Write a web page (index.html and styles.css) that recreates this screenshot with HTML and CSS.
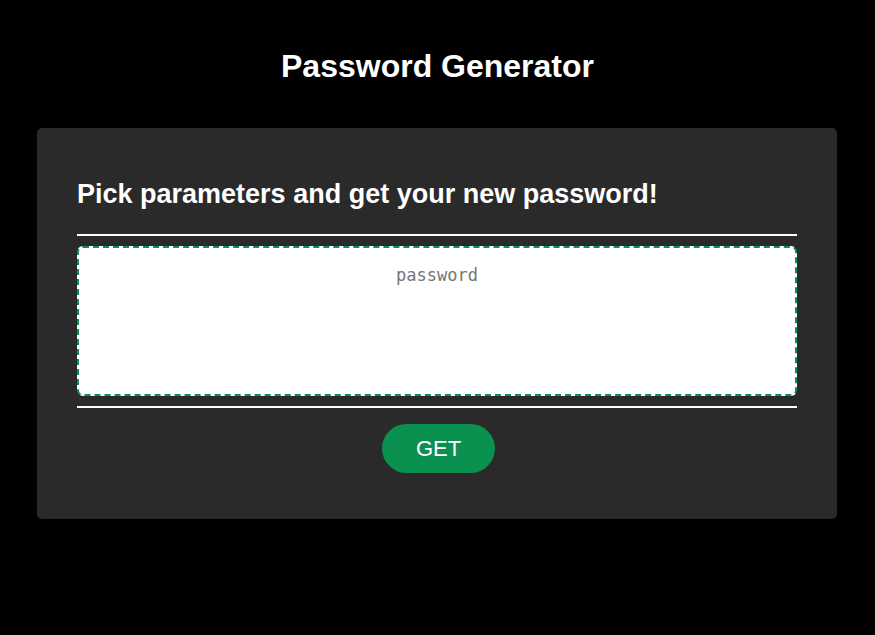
FILE: index.html
```html
<!DOCTYPE html>
<html lang="en">
<head>
<meta charset="UTF-8">
<title>Password Generator</title>
<link rel="stylesheet" href="styles.css">
</head>
<body>
<div class="wrapper">
  <header class="page-header">
    <h1>Password Generator</h1>
  </header>
  <div class="card">
    <div class="card-header">
      <h2>Pick parameters and get your new password!</h2>
    </div>
    <div class="card-body">
      <textarea readonly class="password" placeholder="password" aria-label="Generated Password"></textarea>
    </div>
    <div class="card-footer">
      <button class="btn">GET</button>
    </div>
  </div>
</div>
</body>
</html>
```
FILE: styles.css
```css
* {
  box-sizing: border-box;
}

html, body {
  margin: 0;
  padding: 0;
  height: 100%;
  background-color: #000000;
  font-family: "Liberation Sans", Arial, sans-serif;
  color: #ffffff;
}

.wrapper {
  padding: 48px 1px 0 0;
}

.page-header {
  text-align: center;
  padding-left: 1px;
}

.page-header h1 {
  margin: 0 0 43px;
  font-size: 32px;
  font-weight: bold;
  line-height: 37px;
}

.card {
  max-width: 800px;
  margin: 0 auto;
  background-color: #2a2a2a;
  border-radius: 5px;
  padding: 51px 40px 46px;
}

.card-header h2 {
  margin: 0;
  font-size: 27px;
  font-weight: bold;
  line-height: 31px;
}

.card-header::after {
  content: "";
  display: block;
  height: 2px;
  background-color: #ffffff;
  margin-top: 24px;
}

.card-body {
  padding: 10px 0;
}

.password {
  display: block;
  width: 100%;
  height: 150px;
  border: 2px dashed #0a9150;
  border-radius: 6px;
  background: #ffffff;
  resize: none;
  overflow: hidden;
  padding: 17px 0;
  font-family: "DejaVu Sans Mono", monospace;
  font-size: 17px;
  text-align: center;
  color: #222222;
  outline: none;
}

.password::placeholder {
  color: #757575;
}

.card-footer {
  text-align: center;
  padding-top: 16px;
}

.card-footer::before {
  content: "";
  display: block;
  height: 2px;
  background-color: #ffffff;
  margin-top: -16px;
  margin-bottom: 16px;
}

.btn {
  border: none;
  background-color: #0a9150;
  border-radius: 25px;
  color: #ffffff;
  padding: 12px 34px;
  margin-left: 3px;
  font-family: "Liberation Sans", Arial, sans-serif;
  font-size: 22px;
  line-height: 25px;
  cursor: pointer;
}
```
